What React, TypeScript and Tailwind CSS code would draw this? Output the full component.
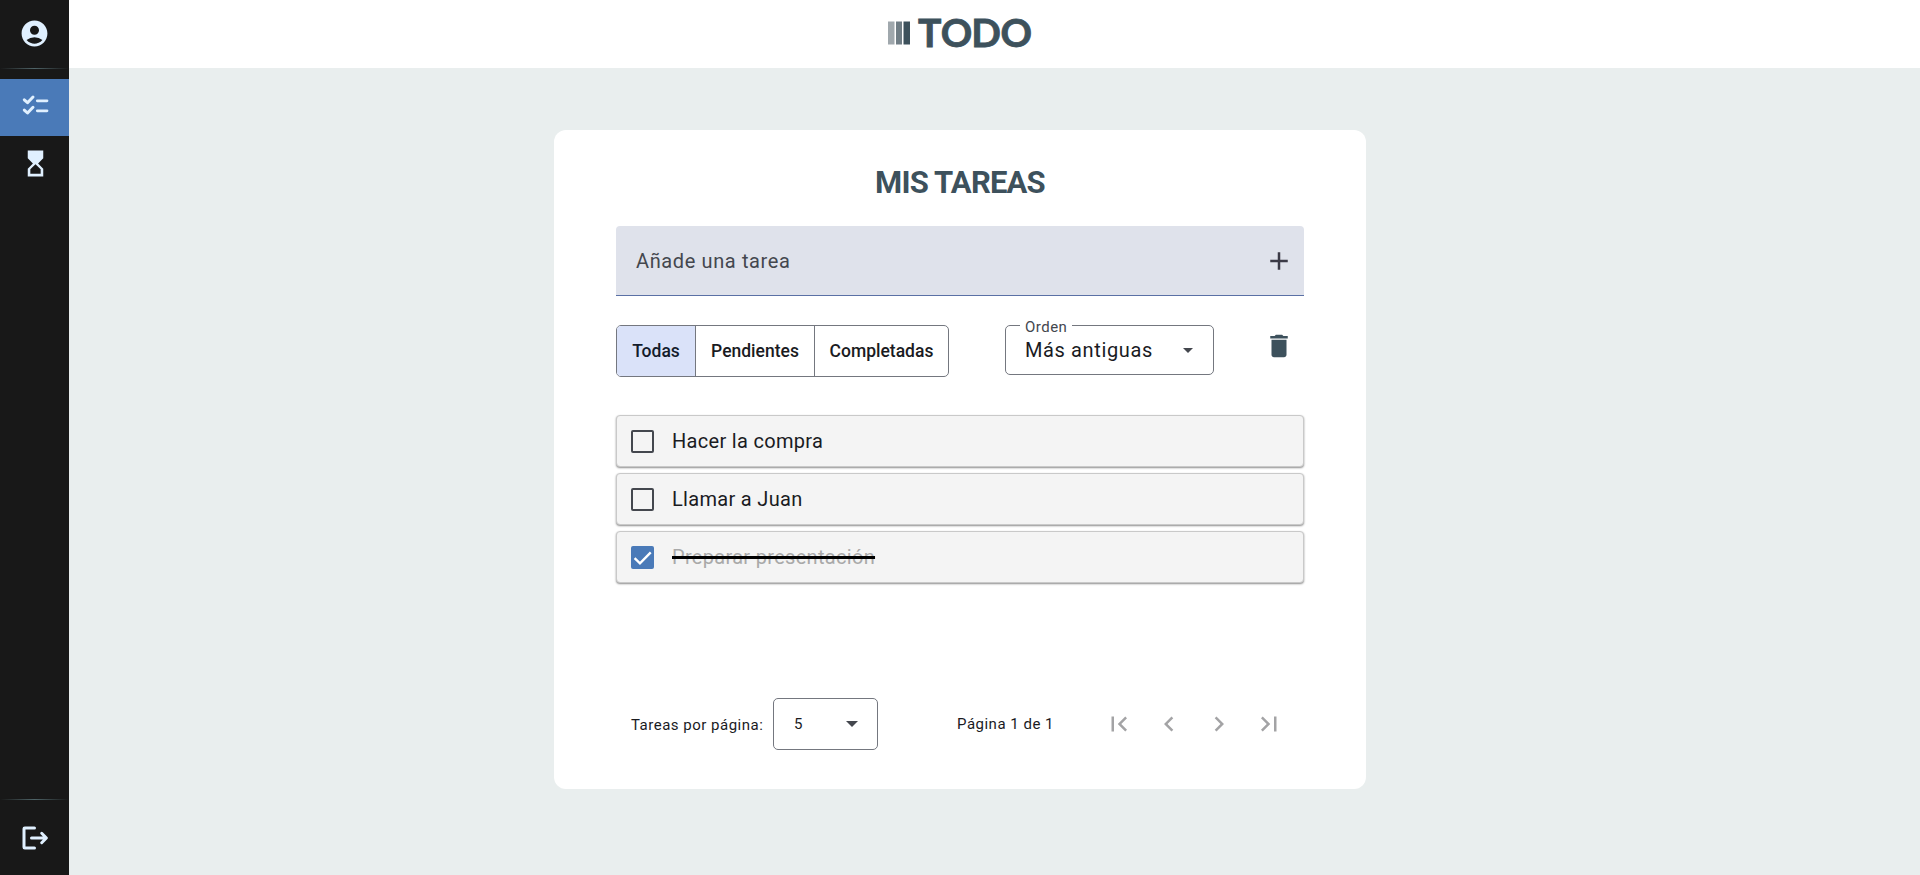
import { MdAccountCircle, MdAdd, MdChevronLeft, MdChevronRight, MdDelete, MdFirstPage, MdHourglassTop, MdLastPage } from "react-icons/md";

const ChecklistIcon = () => (
  <svg className="h-[30px] w-[30px]" viewBox="0 0 30 30" fill="none" stroke="#e0f0ff" strokeWidth="3" strokeLinecap="round" strokeLinejoin="round">
    <path d="M4.3 8.8 7.5 11.7 13 6M4.3 19.1 7.5 22 13 16.3" />
    <path d="M17.3 9.8H27M17.3 19.8H27" strokeWidth="2.8" />
  </svg>
);

const LogoutIcon = () => (
  <svg className="h-[30px] w-[30px]" viewBox="0 0 30 30" fill="none" stroke="#e0f0ff" strokeWidth="3" strokeLinecap="round" strokeLinejoin="round">
    <path d="M14.5 5H4.8Q4 5 4 5.8V24.2Q4 25 4.8 25H14.5" />
    <path d="M11.5 15H26M21.7 10.3 26.4 15 21.7 19.7" />
  </svg>
);

const Logo = () => (
  <svg className="-mt-[6px] h-[54px] w-[148px] overflow-visible" viewBox="0 -6 148 54">
    <rect x="2" y="7.5" width="6.5" height="23" fill="#a0a8ad" />
    <rect x="10" y="7.5" width="6" height="23" fill="#707d85" />
    <rect x="17.5" y="7.5" width="6.5" height="23" fill="#3d515c" />
    <text y="32.6" x="32.1 54.7 85.3 114.6" fontFamily="Lato, sans-serif" fontWeight="700" fontSize="39" fill="#3d515c" stroke="#3d515c" strokeWidth="0.8">
      TODO
    </text>
  </svg>
);

const Caret = ({ className }: { className: string }) => (
  <svg className={className} viewBox="0 0 10 5">
    <path d="M0 0H10L5 5Z" fill="#44474e" />
  </svg>
);

const Checkbox = ({ checked }: { checked: boolean }) =>
  checked ? (
    <span className="flex size-[23px] items-center justify-center rounded-[2px] bg-[#4a7ab8]">
      <svg className="size-[19px]" viewBox="0 0 24 24" fill="none" stroke="white" strokeWidth="3">
        <path d="M2 12.8 8.8 19.3 22.4 5.6" />
      </svg>
    </span>
  ) : (
    <span className="size-[23px] rounded-[2px] border-2 border-[#44474e]" />
  );

const tasks = [
  { text: "Hacer la compra", done: false },
  { text: "Llamar a Juan", done: false },
  { text: "Preparar presentación", done: true },
];

export default function App() {
  return (
    <div className="flex h-[875px] w-full bg-[#e9eeee] font-['Roboto',sans-serif] text-[#1a1b1f]">
      <nav className="flex w-[69px] shrink-0 flex-col bg-[#181818]">
        <div className="flex h-[68px] items-center justify-center pr-[1px] pb-[2px]">
          <MdAccountCircle className="size-[31px] text-[#e0f0ff]" />
        </div>
        <div className="h-px bg-gradient-to-r from-transparent via-[#4f6468] to-transparent" />
        <div className="mt-[10px] flex h-[57px] items-center justify-center bg-[#4a7ab8] pb-[3px]">
          <ChecklistIcon />
        </div>
        <div className="flex h-[54px] items-center justify-center pl-[1px]">
          <MdHourglassTop className="size-[31px] text-[#e0f0ff]" />
        </div>
        <div className="mt-auto h-px bg-gradient-to-r from-transparent via-[#4f6468] to-transparent" />
        <div className="flex h-[75px] items-center justify-center">
          <LogoutIcon />
        </div>
      </nav>
      <div className="flex min-w-0 flex-1 flex-col">
        <header className="flex h-[68px] shrink-0 justify-center bg-white pt-[14px] pr-[69px]">
          <Logo />
        </header>
        <main className="flex justify-center pt-[62px] pr-[69px]">
          <section className="flex h-[659px] w-[812px] flex-col rounded-xl bg-white px-[62px]">
            <h1 className="mt-[33px] text-center text-[31px] leading-[40px] font-bold tracking-[-0.8px] text-[#3d515c]">MIS TAREAS</h1>
            <div className="mt-[23px] flex h-[70px] shrink-0 items-center justify-between rounded-t-[4px] border-b border-[#5a70a5] bg-[#dfe2eb] pr-[10px] pl-5">
              <span className="text-[20px] tracking-[0.62px] text-[#44474e]">Añade una tarea</span>
              <MdAdd className="size-[30px] text-[#3b3a46]" />
            </div>
            <div className="mt-[29px] flex h-[52px] shrink-0 items-start">
              <div className="flex h-[52px] w-[333px] overflow-hidden rounded-[5px] border border-[#74777f] text-[17.5px] font-medium">
                <div className="flex w-[78px] items-center justify-center bg-[#dae2f9] text-[#131c2c]">Todas</div>
                <div className="flex w-[119px] items-center justify-center border-l border-[#74777f]">Pendientes</div>
                <div className="flex flex-1 items-center justify-center border-l border-[#74777f]">Completadas</div>
              </div>
              <div className="relative ml-[56px] flex h-[50px] w-[209px] items-center justify-between rounded-[5px] border border-[#74777f] pr-5 pl-[19px]">
                <span className="absolute -top-[9px] left-[14px] bg-white px-[5px] text-[15px] leading-[20px] tracking-[0.47px] text-[#44474e]">Orden</span>
                <span className="text-[20px] tracking-[0.62px]">Más antiguas</span>
                <Caret className="h-[5px] w-[10px]" />
              </div>
              <MdDelete className="mt-[6px] ml-[50px] size-[30px] text-[#3d515c]" />
            </div>
            <ul className="mt-[38px] flex flex-col gap-[6px]">
              {tasks.map((t) => (
                <li key={t.text} className="flex h-[52px] items-center gap-[18px] rounded-[4px] border border-[#c9c9c9] bg-[#f4f4f4] pl-[14px] shadow-[0_1px_2px_rgba(0,0,0,0.45)]">
                  <Checkbox checked={t.done} />
                  <span className={t.done ? "text-[20px] tracking-[0.31px] text-[#a9a9a9] line-through decoration-black decoration-[3px]" : "text-[20px] tracking-[0.31px]"}>{t.text}</span>
                </li>
              ))}
            </ul>
            <footer className="mt-auto mb-[39px] flex h-[52px] items-center pl-[15px] text-[15px] tracking-[0.5px]">
              <span className="w-[142px] pt-[2px] whitespace-nowrap">Tareas por página:</span>
              <div className="flex h-[52px] w-[105px] items-center justify-between rounded-[5px] border border-[#74777f] pr-[19px] pl-5">
                <span>5</span>
                <Caret className="h-[6px] w-[12px]" />
              </div>
              <span className="ml-[79px] w-[147px] whitespace-nowrap">Página 1 de 1</span>
              <div className="flex gap-5 text-[#a3a3a5]">
                <MdFirstPage className="size-[30px]" />
                <MdChevronLeft className="size-[30px]" />
                <MdChevronRight className="size-[30px]" />
                <MdLastPage className="size-[30px]" />
              </div>
            </footer>
          </section>
        </main>
      </div>
    </div>
  );
}
